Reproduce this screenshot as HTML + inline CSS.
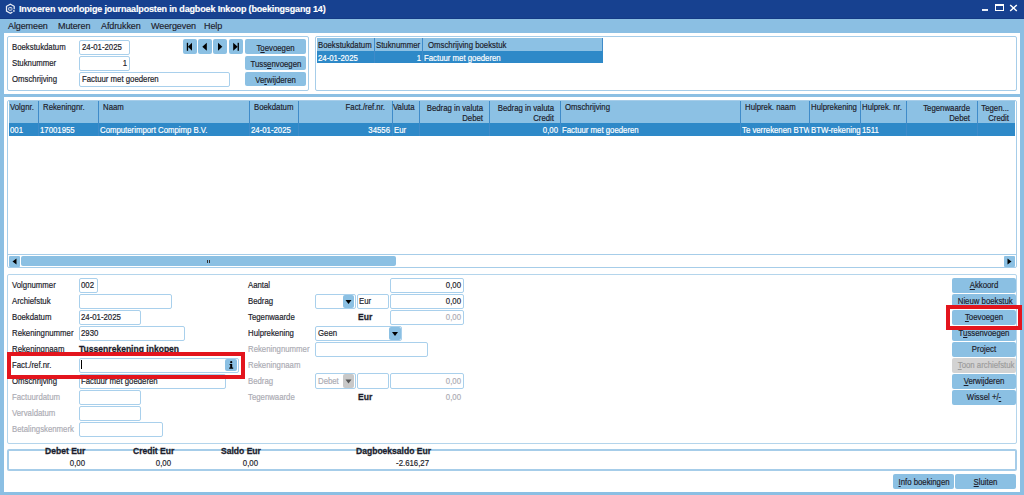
<!DOCTYPE html>
<html><head><meta charset="utf-8">
<style>
html,body{margin:0;padding:0}
body{width:1024px;height:495px;overflow:hidden;position:relative;background:#8bbfe3;font-family:"Liberation Sans",sans-serif;font-size:9px;color:#1d1d2b}
.a{position:absolute}
.t{position:absolute;white-space:nowrap;line-height:10px;font-size:9.5px;letter-spacing:0;transform:scaleX(.82);transform-origin:0 0;-webkit-text-stroke:0.2px currentColor}
.m{position:absolute;white-space:nowrap;line-height:11px;font-size:9px;letter-spacing:-0.1px;-webkit-text-stroke:0.15px currentColor}
.r{text-align:right;transform-origin:100% 0}
.c{text-align:center;transform-origin:50% 0}
.b{font-weight:bold;letter-spacing:0;transform:scaleX(.9);-webkit-text-stroke:0.3px currentColor}
.g{color:#acacb4}
.w{color:#fff}
.inp{position:absolute;box-sizing:border-box;border:1px solid #a9d0ec;border-radius:2px;background:#fff}
.btn{position:absolute;box-sizing:border-box;background:#8bc0e3;border-radius:2px}
.box{position:absolute;box-sizing:border-box;border:1px solid #a6cde9;border-radius:2px}
.pan{position:absolute;background:#fff}
.hdr{position:absolute;background:#8cc1e4}
.sel{position:absolute;background:#2e89c8}
.dv{position:absolute;width:1px;background:#3f8bc9}
u{text-decoration:underline;text-decoration-thickness:0.8px;text-underline-offset:0.8px}
</style></head><body>
<!-- title bar -->
<div class="a" style="left:0;top:0;width:1024px;height:19px;background:#174190"></div><div class="a" style="left:0;top:18px;width:1024px;height:1px;background:#143a85"></div>
<svg class="a" style="left:0;top:0" width="20" height="18" viewBox="0 0 20 18"><path d="M14.2 9.3 L14.2 6.3 L10.35 4.1 L6.5 6.3 L6.5 11.1 L10.35 13.3 L12.4 12.1" fill="none" stroke="#fff" stroke-width="1.25" stroke-opacity="0.9"/><circle cx="13.9" cy="10.9" r="0.9" fill="#fff" fill-opacity="0.85"/><rect x="8.6" y="7.5" width="3.3" height="2.8" rx="0.8" fill="none" stroke="#fff" stroke-width="0.9" stroke-opacity="0.85"/><path d="M9.2 8.9 L11.3 8.9" stroke="#fff" stroke-width="0.5" stroke-opacity="0.6"/></svg>
<div class="m w" style="left:19px;top:4px;letter-spacing:-0.15px;font-weight:bold">Invoeren voorlopige journaalposten in dagboek Inkoop (boekingsgang 14)</div>
<div class="a" style="left:982px;top:9px;width:6px;height:2px;background:#e8eef8"></div>
<div class="a" style="left:995px;top:4px;width:9px;height:7px;box-sizing:border-box;border:1px solid #fff;border-top-width:2px"></div>
<svg class="a" style="left:1009px;top:4px" width="9" height="8" viewBox="0 0 9 8"><path d="M1.2 1 L7.8 7 M7.8 1 L1.2 7" stroke="#fff" stroke-width="1.5"/></svg>
<!-- menu -->
<div class="m" style="left:8px;top:21px">Algemeen</div>
<div class="m" style="left:58px;top:21px">Muteren</div>
<div class="m" style="left:101px;top:21px">Afdrukken</div>
<div class="m" style="left:151px;top:21px">Weergeven</div>
<div class="m" style="left:204px;top:21px">Help</div>

<!-- top panel -->
<div class="pan" style="left:4px;top:33px;width:1016px;height:61px"></div>
<div class="box" style="left:7px;top:36px;width:302px;height:55px"></div>
<div class="box" style="left:315px;top:36px;width:702px;height:55px"></div>

<!-- top left box content -->
<div class="t" style="left:12px;top:42px">Boekstukdatum</div>
<div class="t" style="left:12px;top:58px">Stuknummer</div>
<div class="t" style="left:12px;top:74px">Omschrijving</div>
<div class="inp" style="left:79px;top:40px;width:51px;height:15px"></div>
<div class="inp" style="left:79px;top:56px;width:51px;height:15px"></div>
<div class="inp" style="left:79px;top:72px;width:151px;height:15px"></div>
<div class="t" style="left:82px;top:42px">24-01-2025</div>
<div class="t r" style="left:79px;top:58px;width:48px">1</div>
<div class="t" style="left:82px;top:74px">Factuur met goederen</div>
<div class="btn" style="left:183px;top:39px;width:14px;height:15px"></div>
<div class="btn" style="left:198px;top:39px;width:14px;height:15px"></div>
<div class="btn" style="left:213px;top:39px;width:14px;height:15px"></div>
<div class="btn" style="left:229px;top:39px;width:14px;height:15px"></div>
<svg class="a" style="left:183px;top:39px" width="60" height="16" viewBox="0 0 60 16">
<rect x="3.8" y="3.8" width="1.3" height="8" fill="#000"/><path d="M4.9 7.8 L9 3.8 L9 11.8 Z" fill="#000"/>
<path d="M19.3 7.8 L23.8 3.8 L23.8 11.8 Z" fill="#000"/>
<path d="M35 3.8 L39.3 7.8 L35 11.8 Z" fill="#000"/>
<path d="M50.2 3.8 L54.7 7.8 L50.2 11.8 Z" fill="#000"/><rect x="54.6" y="3.8" width="1.3" height="8" fill="#000"/>
</svg>
<div class="btn" style="left:245px;top:39px;width:61px;height:15px"></div>
<div class="btn" style="left:245px;top:56px;width:61px;height:14px"></div>
<div class="btn" style="left:245px;top:72px;width:61px;height:14px"></div>
<div class="t c" style="left:245px;top:43px;width:61px">T<u>o</u>evoegen</div>
<div class="t c" style="left:245px;top:59px;width:61px">Tuss<u>e</u>nvoegen</div>
<div class="t c" style="left:245px;top:75px;width:61px">Ve<u>r</u>wijderen</div>
<!-- top right grid -->
<div class="hdr" style="left:317px;top:38px;width:286px;height:13px"></div>
<div class="sel" style="left:317px;top:51px;width:286px;height:12px"></div>
<div class="dv" style="left:374px;top:38px;height:25px"></div>
<div class="dv" style="left:422px;top:38px;height:25px"></div>
<div class="dv" style="left:602px;top:38px;height:13px"></div>
<div class="t" style="left:318px;top:40px">Boekstukdatum</div>
<div class="t" style="left:376px;top:40px">Stuknummer</div>
<div class="t" style="left:428px;top:40px">Omschrijving boekstuk</div>
<div class="t w" style="left:318px;top:53px">24-01-2025</div>
<div class="t r w" style="left:375px;top:53px;width:46px">1</div>
<div class="t w" style="left:424px;top:53px">Factuur met goederen</div>

<!-- main panel -->
<div class="pan" style="left:4px;top:97px;width:1016px;height:395px"></div>
<div class="box" style="left:7px;top:100px;width:1010px;height:168px"></div>
<div class="hdr" style="left:9px;top:101px;width:1006px;height:22px"></div>
<div class="sel" style="left:9px;top:123px;width:1006px;height:13px"></div>
<div class="dv" style="left:38px;top:101px;height:35px"></div>
<div class="dv" style="left:98px;top:101px;height:35px"></div>
<div class="dv" style="left:249px;top:101px;height:35px"></div>
<div class="dv" style="left:298px;top:101px;height:35px"></div>
<div class="dv" style="left:392px;top:101px;height:35px"></div>
<div class="dv" style="left:419px;top:101px;height:35px"></div>
<div class="dv" style="left:489px;top:101px;height:35px"></div>
<div class="dv" style="left:560px;top:101px;height:35px"></div>
<div class="dv" style="left:740px;top:101px;height:35px"></div>
<div class="dv" style="left:809px;top:101px;height:35px"></div>
<div class="dv" style="left:860px;top:101px;height:35px"></div>
<div class="dv" style="left:906px;top:101px;height:35px"></div>
<div class="dv" style="left:977px;top:101px;height:35px"></div>
<div class="t" style="left:10px;top:102px">Volgnr.</div>
<div class="t" style="left:43px;top:102px">Rekeningnr.</div>
<div class="t" style="left:103px;top:102px">Naam</div>
<div class="t" style="left:254px;top:102px">Boekdatum</div>
<div class="t r" style="left:285px;top:102px;width:100px">Fact./ref.nr.</div>
<div class="t" style="left:393px;top:102px">Valuta</div>
<div class="t r" style="left:383px;top:102px;width:100px;line-height:9.5px;padding-top:1px">Bedrag in valuta<br>Debet</div>
<div class="t r" style="left:454px;top:102px;width:100px;line-height:9.5px;padding-top:1px">Bedrag in valuta<br>Credit</div>
<div class="t" style="left:565px;top:102px">Omschrijving</div>
<div class="t" style="left:745px;top:102px">Hulprek. naam</div>
<div class="t" style="left:811px;top:102px">Hulprekening</div>
<div class="t" style="left:862px;top:102px">Hulprek. nr.</div>
<div class="t r" style="left:870px;top:102px;width:100px;line-height:9.5px;padding-top:1px">Tegenwaarde<br>Debet</div>
<div class="t r" style="left:909px;top:102px;width:100px;line-height:9.5px;padding-top:1px">Tegen...<br>Credit</div>
<div class="t w" style="left:10px;top:125px">001</div>
<div class="t w" style="left:40px;top:125px">17001955</div>
<div class="t w" style="left:100px;top:125px">Computerimport Compimp B.V.</div>
<div class="t w" style="left:251px;top:125px">24-01-2025</div>
<div class="t r w" style="left:299px;top:125px;width:91px">34556</div>
<div class="t w" style="left:394px;top:125px">Eur</div>
<div class="t r w" style="left:490px;top:125px;width:68px">0,00</div>
<div class="t w" style="left:562px;top:125px">Factuur met goederen</div>
<div class="t w" style="left:742px;top:125px;width:82px;overflow:hidden">Te verrekenen BTW</div>
<div class="t w" style="left:811px;top:125px">BTW-rekening</div>
<div class="t w" style="left:862px;top:125px">1511</div>
<!-- scrollbar -->
<div class="a" style="left:8px;top:254px;width:1008px;height:1px;background:#a6cde9"></div>
<div class="btn" style="left:9px;top:256px;width:11px;height:11px;border-radius:1px"></div>
<div class="a" style="left:20px;top:256px;width:1px;height:11px;background:#fff"></div>
<svg class="a" style="left:9px;top:256px" width="11" height="11"><path d="M3.5 5.5 L7.5 2.5 L7.5 8.5 Z" fill="#000"/></svg>
<div class="btn" style="left:21px;top:256px;width:375px;height:10px;border-radius:2px"></div>
<div class="a" style="left:207px;top:260px;width:1px;height:3px;background:#333"></div>
<div class="a" style="left:209px;top:260px;width:1px;height:3px;background:#333"></div>
<div class="btn" style="left:1004px;top:256px;width:11px;height:11px;border-radius:1px"></div>
<svg class="a" style="left:1004px;top:256px" width="11" height="11"><path d="M3.5 2.5 L7.5 5.5 L3.5 8.5 Z" fill="#000"/></svg>

<!-- form panel -->
<div class="box" style="left:7px;top:274px;width:1010px;height:170px;border-color:#b4d5ec"></div>
<div class="t" style="left:12px;top:280px">Volgnummer</div>
<div class="t" style="left:12px;top:296px">Archiefstuk</div>
<div class="t" style="left:12px;top:312px">Boekdatum</div>
<div class="t" style="left:12px;top:328px">Rekeningnummer</div>
<div class="t" style="left:12px;top:344px">Rekeningnaam</div>
<div class="t" style="left:12px;top:360px">Fact./ref.nr.</div>
<div class="t" style="left:12px;top:376px">Omschrijving</div>
<div class="t g" style="left:12px;top:392px">Factuurdatum</div>
<div class="t g" style="left:12px;top:408px">Vervaldatum</div>
<div class="t g" style="left:12px;top:424px">Betalingskenmerk</div>
<div class="inp" style="left:79px;top:278px;width:19px;height:15px"></div>
<div class="inp" style="left:79px;top:294px;width:93px;height:15px"></div>
<div class="inp" style="left:79px;top:310px;width:62px;height:15px"></div>
<div class="inp" style="left:79px;top:326px;width:106px;height:15px"></div>
<div class="inp" style="left:79px;top:358px;width:160px;height:15px"></div>
<div class="inp" style="left:79px;top:374px;width:147px;height:15px"></div>
<div class="inp" style="left:79px;top:390px;width:62px;height:15px"></div>
<div class="inp" style="left:79px;top:406px;width:62px;height:15px"></div>
<div class="inp" style="left:79px;top:422px;width:84px;height:15px"></div>
<div class="t" style="left:81px;top:280px">002</div>
<div class="t" style="left:81px;top:312px">24-01-2025</div>
<div class="t" style="left:81px;top:328px">2930</div>
<div class="t b" style="left:79px;top:344px">Tussenrekening inkopen</div>
<div class="a" style="left:81px;top:360px;width:1px;height:9px;background:#000"></div>
<div class="btn" style="left:225px;top:359px;width:12px;height:12px"></div>
<svg class="a" style="left:225px;top:359px" width="12" height="12" viewBox="0 0 12 12"><circle cx="6.2" cy="3.2" r="1.1" fill="#000"/><path d="M4.6 5 L7.2 5 L7.2 8.6 L8.2 8.6 L8.2 9.8 L4.2 9.8 L4.2 8.6 L5.2 8.6 L5.2 6.1 L4.6 6.1 Z" fill="#000"/></svg>
<div class="t" style="left:81px;top:376px">Factuur met goederen</div>

<div class="t" style="left:248px;top:280px">Aantal</div>
<div class="t" style="left:248px;top:296px">Bedrag</div>
<div class="t" style="left:248px;top:312px">Tegenwaarde</div>
<div class="t" style="left:248px;top:328px">Hulprekening</div>
<div class="t g" style="left:248px;top:344px">Rekeningnummer</div>
<div class="t g" style="left:248px;top:360px">Rekeningnaam</div>
<div class="t g" style="left:248px;top:376px">Bedrag</div>
<div class="t g" style="left:248px;top:392px">Tegenwaarde</div>

<div class="inp" style="left:390px;top:278px;width:74px;height:15px"></div>
<div class="t r" style="left:390px;top:280px;width:71px">0,00</div>
<div class="inp" style="left:315px;top:294px;width:41px;height:15px"></div>
<div class="btn" style="left:343px;top:295px;width:11px;height:13px"></div>
<svg class="a" style="left:343px;top:295px" width="11" height="13"><path d="M2.5 5 L8.5 5 L5.5 9 Z" fill="#000"/></svg>
<div class="inp" style="left:357px;top:294px;width:32px;height:15px"></div>
<div class="t" style="left:359px;top:296px">Eur</div>
<div class="inp" style="left:390px;top:294px;width:74px;height:15px"></div>
<div class="t r" style="left:390px;top:296px;width:71px">0,00</div>
<div class="t b" style="left:358px;top:312px">Eur</div>
<div class="inp" style="left:390px;top:310px;width:74px;height:15px"></div>
<div class="t r g" style="left:390px;top:312px;width:71px">0,00</div>
<div class="inp" style="left:315px;top:326px;width:87px;height:15px"></div>
<div class="t" style="left:318px;top:328px">Geen</div>
<div class="btn" style="left:389px;top:327px;width:12px;height:13px"></div>
<svg class="a" style="left:389px;top:327px" width="12" height="13"><path d="M3 5 L9 5 L6 9 Z" fill="#000"/></svg>
<div class="inp" style="left:315px;top:342px;width:113px;height:15px"></div>
<div class="inp" style="left:315px;top:373px;width:41px;height:16px"></div>
<div class="t g" style="left:318px;top:376px">Debet</div>
<div class="a" style="left:343px;top:374px;width:11px;height:14px;background:#c8c8c8;border-radius:2px"></div>
<svg class="a" style="left:343px;top:374px" width="11" height="14"><path d="M2.5 5.5 L8.5 5.5 L5.5 9.5 Z" fill="#555"/></svg>
<div class="inp" style="left:357px;top:373px;width:32px;height:16px"></div>
<div class="inp" style="left:390px;top:373px;width:74px;height:16px"></div>
<div class="t r g" style="left:390px;top:376px;width:71px">0,00</div>
<div class="t b" style="left:358px;top:392px">Eur</div>
<div class="t r g" style="left:390px;top:392px;width:71px">0,00</div>

<!-- right buttons -->
<div class="btn" style="left:952px;top:278px;width:64px;height:15px"></div>
<div class="btn" style="left:952px;top:294px;width:64px;height:15px"></div>
<div class="btn" style="left:952px;top:310px;width:64px;height:15px"></div>
<div class="btn" style="left:952px;top:326px;width:64px;height:15px"></div>
<div class="btn" style="left:952px;top:342px;width:64px;height:15px"></div>
<div class="btn" style="left:952px;top:358px;width:64px;height:15px;background:#d3d3d3"></div>
<div class="btn" style="left:952px;top:374px;width:64px;height:15px"></div>
<div class="btn" style="left:952px;top:390px;width:64px;height:15px"></div>
<div class="t c" style="left:952px;top:280px;width:64px"><u>A</u>kkoord</div>
<div class="t c" style="left:952px;top:296px;width:64px">Nieuw boekstuk</div>
<div class="t c" style="left:952px;top:312px;width:64px"><u>T</u>oevoegen</div>
<div class="t c" style="left:952px;top:328px;width:64px">T<u>u</u>ssenvoegen</div>
<div class="t c" style="left:952px;top:344px;width:64px">Project</div>
<div class="t c" style="left:952px;top:360px;width:64px;color:#9c9c9c"><u>T</u>oon archiefstuk</div>
<div class="t c" style="left:952px;top:376px;width:64px"><u>V</u>erwijderen</div>
<div class="t c" style="left:952px;top:392px;width:64px">Wissel +/<u>-</u></div>

<!-- totals -->
<div class="a" style="left:7px;top:449px;width:1010px;height:22px;box-sizing:border-box;border:2px solid #a6cde9;border-radius:2px"></div>
<div class="t b" style="left:45px;top:446px">Debet Eur</div>
<div class="t b" style="left:133px;top:446px">Credit Eur</div>
<div class="t b" style="left:221px;top:446px">Saldo Eur</div>
<div class="t b" style="left:356px;top:446px">Dagboeksaldo Eur</div>
<div class="t r" style="left:20px;top:458px;width:65px">0,00</div>
<div class="t r" style="left:106px;top:458px;width:65px">0,00</div>
<div class="t r" style="left:193px;top:458px;width:65px">0,00</div>
<div class="t r" style="left:330px;top:458px;width:99px">-2.616,27</div>

<!-- bottom buttons -->
<div class="btn" style="left:893px;top:474px;width:61px;height:15px"></div>
<div class="btn" style="left:955px;top:474px;width:61px;height:15px"></div>
<div class="t c" style="left:893px;top:477px;width:61px"><u>I</u>nfo boekingen</div>
<div class="t c" style="left:955px;top:477px;width:61px"><u>S</u>luiten</div>

<!-- red highlight boxes -->
<div class="a" style="left:7px;top:352px;width:238px;height:27px;box-sizing:border-box;border:4px solid #e3151d"></div>
<div class="a" style="left:946px;top:305px;width:76px;height:25px;box-sizing:border-box;border:4px solid #e3151d"></div>
</body></html>
